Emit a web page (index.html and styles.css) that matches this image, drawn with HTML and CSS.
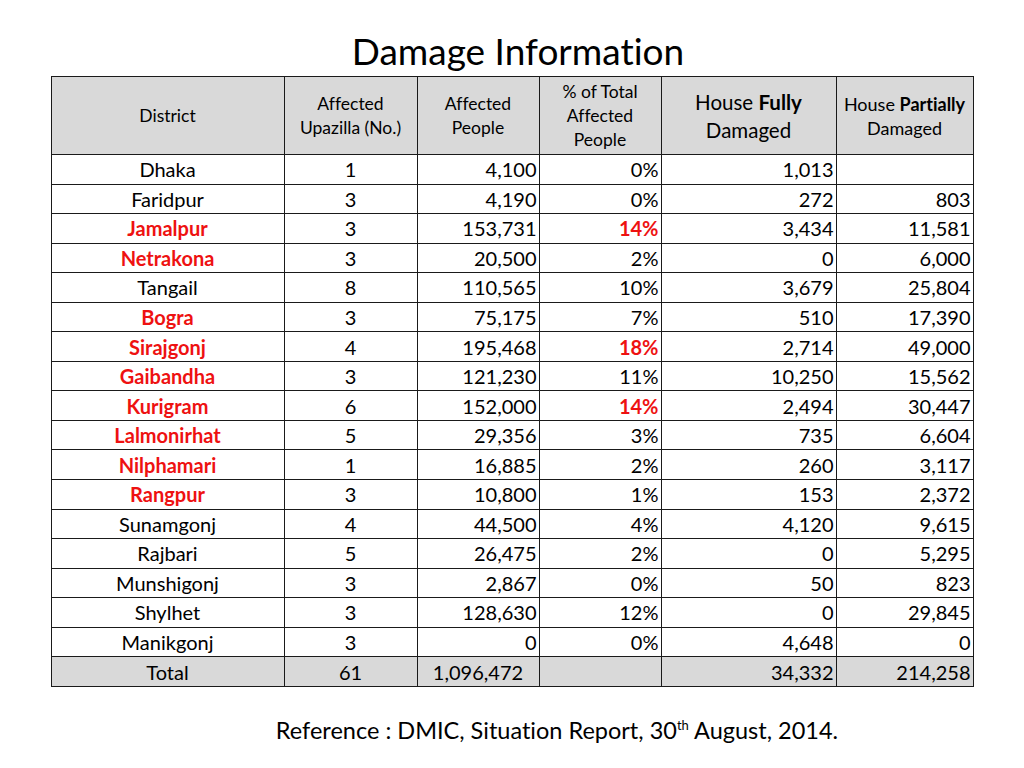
FILE: index.html
```html
<!DOCTYPE html>
<html>
<head>
<meta charset="utf-8">
<link rel="stylesheet" href="styles.css">
</head>
<body>
<div class="slide">
  <h1 class="title">Damage Information</h1>
  <table class="data">
    <colgroup>
      <col class="c1"><col class="c2"><col class="c3"><col class="c4"><col class="c5"><col class="c6">
    </colgroup>
    <thead>
      <tr>
        <th class="hs">District</th>
        <th class="hs">Affected<br>Upazilla (No.)</th>
        <th class="hs">Affected<br>People</th>
        <th class="hs">% of Total<br>Affected<br>People</th>
        <th class="hl">House <b>Fully</b><br>Damaged</th>
        <th class="hm2">House <b>Partially</b><br>Damaged</th>
      </tr>
    </thead>
    <tbody>
      <tr><td class="d">Dhaka</td><td class="c">1</td><td>4,100</td><td>0%</td><td>1,013</td><td></td></tr>
      <tr><td class="d">Faridpur</td><td class="c">3</td><td>4,190</td><td>0%</td><td>272</td><td>803</td></tr>
      <tr><td class="d red">Jamalpur</td><td class="c">3</td><td>153,731</td><td class="red">14%</td><td>3,434</td><td>11,581</td></tr>
      <tr><td class="d red">Netrakona</td><td class="c">3</td><td>20,500</td><td>2%</td><td>0</td><td>6,000</td></tr>
      <tr><td class="d">Tangail</td><td class="c">8</td><td>110,565</td><td>10%</td><td>3,679</td><td>25,804</td></tr>
      <tr><td class="d red">Bogra</td><td class="c">3</td><td>75,175</td><td>7%</td><td>510</td><td>17,390</td></tr>
      <tr><td class="d red">Sirajgonj</td><td class="c">4</td><td>195,468</td><td class="red">18%</td><td>2,714</td><td>49,000</td></tr>
      <tr><td class="d red">Gaibandha</td><td class="c">3</td><td>121,230</td><td>11%</td><td>10,250</td><td>15,562</td></tr>
      <tr><td class="d red">Kurigram</td><td class="c">6</td><td>152,000</td><td class="red">14%</td><td>2,494</td><td>30,447</td></tr>
      <tr><td class="d red">Lalmonirhat</td><td class="c">5</td><td>29,356</td><td>3%</td><td>735</td><td>6,604</td></tr>
      <tr><td class="d red">Nilphamari</td><td class="c">1</td><td>16,885</td><td>2%</td><td>260</td><td>3,117</td></tr>
      <tr><td class="d red">Rangpur</td><td class="c">3</td><td>10,800</td><td>1%</td><td>153</td><td>2,372</td></tr>
      <tr><td class="d">Sunamgonj</td><td class="c">4</td><td>44,500</td><td>4%</td><td>4,120</td><td>9,615</td></tr>
      <tr><td class="d">Rajbari</td><td class="c">5</td><td>26,475</td><td>2%</td><td>0</td><td>5,295</td></tr>
      <tr><td class="d">Munshigonj</td><td class="c">3</td><td>2,867</td><td>0%</td><td>50</td><td>823</td></tr>
      <tr><td class="d">Shylhet</td><td class="c">3</td><td>128,630</td><td>12%</td><td>0</td><td>29,845</td></tr>
      <tr><td class="d">Manikgonj</td><td class="c">3</td><td>0</td><td>0%</td><td>4,648</td><td>0</td></tr>
      <tr class="total"><td class="d">Total</td><td class="c">61</td><td class="c">1,096,472</td><td></td><td>34,332</td><td>214,258</td></tr>
    </tbody>
  </table>
  <p class="ref">Reference : DMIC, Situation Report, 30<sup>th</sup> August, 2014.</p>
</div>
</body>
</html>
```

FILE: styles.css
```css
html, body {
  margin: 0;
  padding: 0;
  background: #ffffff;
}
body {
  font-family: "Lato", "Open Sans", sans-serif;
  color: #000;
  font-variant-ligatures: none;
}
.slide {
  width: 1024px;
  height: 768px;
  display: flex;
  flex-direction: column;
  align-items: center;
}
.title {
  margin: 28px 0 0 0;
  height: 48px;
  line-height: 46px;
  font-size: 37px;
  font-weight: 400;
  text-align: center;
  padding-left: 12px;
}
.data {
  border-collapse: collapse;
  table-layout: fixed;
  width: 922px;
}
.c1 { width: 233px; }
.c2 { width: 133px; }
.c3 { width: 122px; }
.c4 { width: 122px; }
.c5 { width: 175px; }
.c6 { width: 137px; }
.data th, .data td {
  border: 1.5px solid #1a1a1a;
  padding: 0 2px;
}
.data thead tr { height: 78px; }
.data th {
  background: #d9d9d9;
  font-weight: 400;
  text-align: center;
  vertical-align: middle;
}
.hs { font-size: 17.5px; line-height: 24px; }
.hl { font-size: 20.5px; line-height: 28px; }
.hm2 { font-size: 18px; line-height: 24px; }
.data th b { font-weight: 700; }
.data tbody tr { height: 29.55px; }
.data td {
  font-size: 20px;
  line-height: 24px;
  text-align: right;
  vertical-align: middle;
}
.data td.d, .data td.c { text-align: center; }
.data td.red {
  color: #ee1111;
  font-weight: 700;
}
.total td {
  background: #d9d9d9;
}
.ref {
  margin: 28px 0 0 0;
  padding-left: 90px;
  font-size: 23.5px;
  line-height: 30px;
}
.ref sup {
  font-size: 13px;
  line-height: 0;
  vertical-align: 9px;
}
```
